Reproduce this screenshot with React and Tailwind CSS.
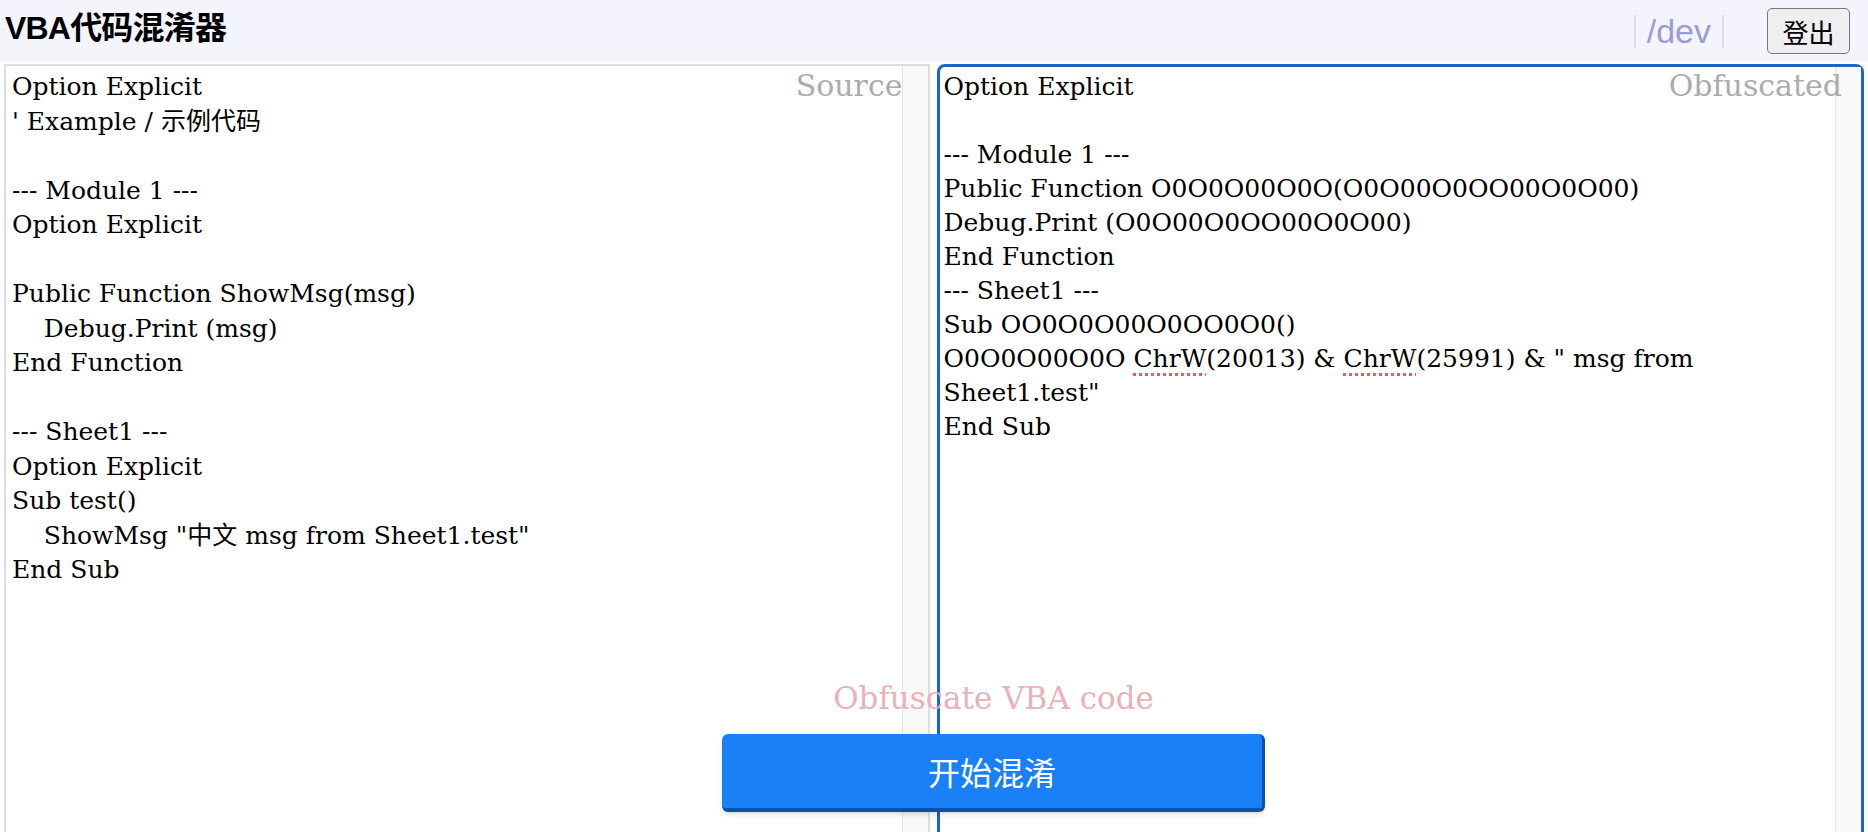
import React from 'react';

const fn = 'O0O0O00O0O';
const arg = 'O0O00O0OO00O0O00';
const sub = 'OO0O0O00O0OO0O0';

const sourceLines = [
  'Option Explicit',
  "' Example / 示例代码",
  '',
  '--- Module 1 ---',
  'Option Explicit',
  '',
  'Public Function ShowMsg(msg)',
  '    Debug.Print (msg)',
  'End Function',
  '',
  '--- Sheet1 ---',
  'Option Explicit',
  'Sub test()',
  '    ShowMsg "中文 msg from Sheet1.test"',
  'End Sub',
];

const codeFont = "font-['DejaVu_Serif','Noto_Sans_CJK_SC',serif]";

// fake scrollbar track on the right side of each textarea
function Track() {
  return <div className="w-[26px] shrink-0 bg-[#f8f8f8] border-l border-[#e6e6e6]" />;
}

function Spell({ children }) {
  return (
    <span className="underline decoration-dotted decoration-[#ec5b5b] decoration-[3px] underline-offset-[6px]">
      {children}
    </span>
  );
}

export default function App() {
  return (
    <div className="relative h-[832px] overflow-hidden bg-white text-black">
      {/* Header */}
      <header className="flex h-[62px] items-center justify-between bg-[#f4f4fd] pl-[5px] pr-[18px]">
        <h1 className="-mt-[6px] text-[32px] font-bold tracking-tight font-['Liberation_Sans','Noto_Sans_CJK_SC',sans-serif]">
          VBA代码混淆器
        </h1>
        <div className="flex items-center gap-[43px]">
          <span className="flex h-[33px] items-center border-x-2 border-[#dcdcf2] px-[11px] text-[34px] text-[#9c9cd4] font-['Liberation_Sans',sans-serif]">
            /dev
          </span>
          <button className="flex h-[46px] w-[83px] items-center justify-center rounded-[5px] border border-[#777] bg-[#efefef] text-[26px] font-['Noto_Sans_CJK_SC',sans-serif]">
            登出
          </button>
        </div>
      </header>

      {/* Editors */}
      <main className="mt-[2px] flex h-[800px] gap-[7px] pl-[4px] pr-[4px]">
        <section className="relative flex flex-1 border-2 border-[#dedede]">
          <div className={`flex-1 pl-[6px] pt-[4px] text-[25px] leading-[34.5px] whitespace-pre ${codeFont}`}>
            {sourceLines.map((l, i) => (
              <div key={i} className="h-[34.5px]">{l}</div>
            ))}
          </div>
          <Track />
          <span className={`absolute right-[25px] -top-[3px] text-[30px] text-[#ababab] ${codeFont}`}>Source</span>
        </section>

        <section className="relative flex flex-1 rounded-t-[8px] border-[3px] border-[#1a64c6]">
          <div className={`flex-1 pl-[4px] pt-[3px] text-[25px] leading-[34px] whitespace-pre ${codeFont}`}>
            <div className="h-[34px]">Option Explicit</div>
            <div className="h-[34px]" />
            <div className="h-[34px]">--- Module 1 ---</div>
            <div className="h-[34px]">Public Function {fn}({arg})</div>
            <div className="h-[34px]">Debug.Print ({arg})</div>
            <div className="h-[34px]">End Function</div>
            <div className="h-[34px]">--- Sheet1 ---</div>
            <div className="h-[34px]">Sub {sub}()</div>
            <div className="h-[34px]">
              {fn} <Spell>ChrW</Spell>(20013) &amp; <Spell>ChrW</Spell>(25991) &amp; " msg from
            </div>
            <div className="h-[34px]">Sheet1.test"</div>
            <div className="h-[34px]">End Sub</div>
          </div>
          <Track />
          <span className={`absolute right-[19px] -top-[4px] text-[30px] text-[#ababab] ${codeFont}`}>Obfuscated</span>
        </section>
      </main>

      {/* Action overlay */}
      <div className="absolute left-[722px] top-[678px] flex w-[543px] flex-col items-center">
        <span className={`text-[31px] leading-[40px] text-[#eab2b6] ${codeFont}`}>Obfuscate VBA code</span>
        <button className="mt-[16px] flex h-[78px] w-full items-center justify-center rounded-[6px] border-b-[4px] border-r-[3px] border-[#0b50a9] bg-[#1a80f8] text-[32px] text-white shadow-md font-['Noto_Sans_CJK_SC',sans-serif]">
          开始混淆
        </button>
      </div>
    </div>
  );
}
